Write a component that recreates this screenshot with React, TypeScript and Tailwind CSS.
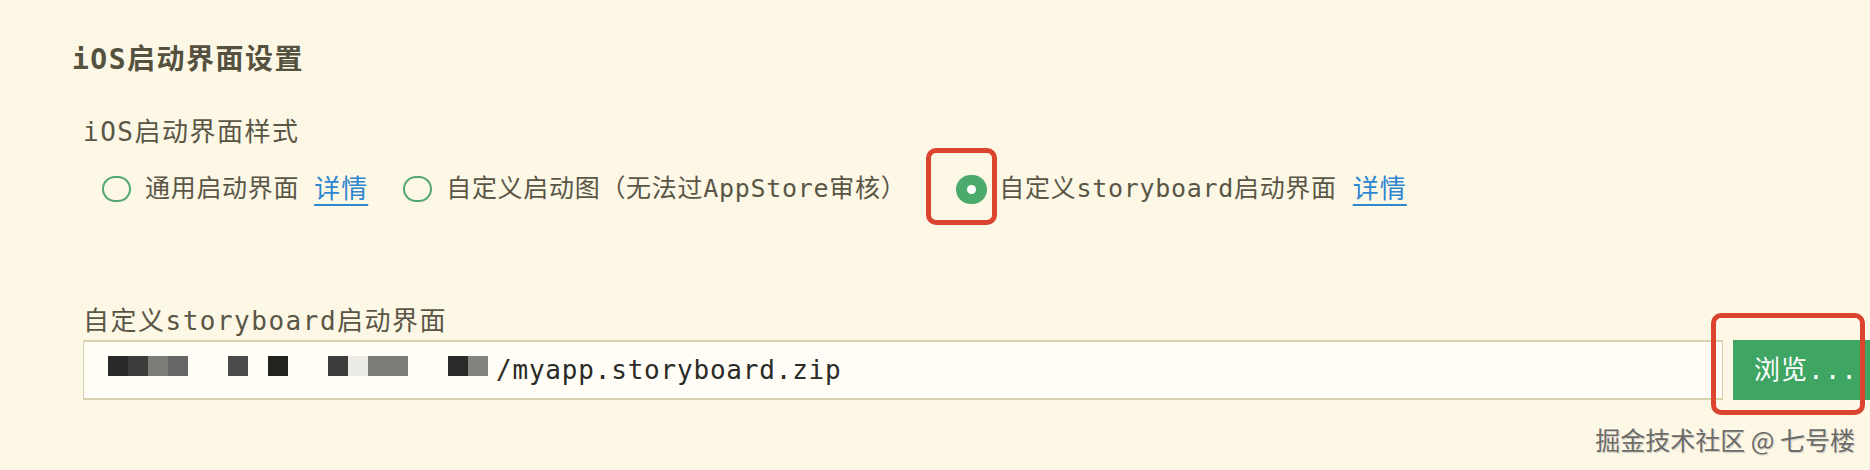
const mono = "font-['DejaVu_Sans_Mono','Noto_Sans_CJK_SC',monospace]"

function Radio({ checked = false }: { checked?: boolean }) {
  if (checked) {
    return (
      <span className="flex h-[29px] w-[31px] shrink-0 items-center justify-center rounded-full bg-[#4caa6c]">
        <span className="h-[9px] w-[9px] rounded-full bg-white" />
      </span>
    )
  }
  return <span className="block h-[26px] w-[29px] shrink-0 rounded-full border-2 border-[#52a673]" />
}

function Detail() {
  return <a className="text-[26px] tracking-[1px] text-[#2f86d1] underline decoration-[1.5px] underline-offset-[6px]">详情</a>
}

const blocks = [
  { w: "w-[20px]", c: "bg-[#282826]" },
  { w: "w-[20px]", c: "bg-[#3b3b39]" },
  { w: "w-[20px]", c: "bg-[#7b7b78]" },
  { w: "w-[20px]", c: "bg-[#666664]" },
  { w: "w-[40px]", c: "bg-transparent" },
  { w: "w-[20px]", c: "bg-[#4a4a48]" },
  { w: "w-[20px]", c: "bg-transparent" },
  { w: "w-[20px]", c: "bg-[#22221f]" },
  { w: "w-[40px]", c: "bg-transparent" },
  { w: "w-[20px]", c: "bg-[#3d3d3b]" },
  { w: "w-[20px]", c: "bg-[#ecebe6]" },
  { w: "w-[40px]", c: "bg-[#7c7c79]" },
  { w: "w-[40px]", c: "bg-transparent" },
  { w: "w-[20px]", c: "bg-[#2a2a28]" },
  { w: "w-[20px]", c: "bg-[#838380]" },
]

export default function App() {
  return (
    <div className={`relative h-[470px] w-[1870px] overflow-hidden bg-[#fdf8e6] text-[#5a5646] ${mono}`}>
      <div className="pl-[72px] pt-[42px]">
        <h2 className="text-[28px] font-bold leading-[36px] tracking-[1.5px] text-[#55513f]">iOS启动界面设置</h2>
      </div>

      <div className="pl-[83px]">
        <p className="mt-[38px] text-[26px] leading-[32px] tracking-[1.5px]">iOS启动界面样式</p>

        <div className="ml-[19px] mt-[21px] flex h-[40px] items-center text-[25px] tracking-[0.7px]">
          <Radio />
          <span className="ml-[14px]">通用启动界面</span>
          <span className="ml-[15px]"><Detail /></span>

          <span className="ml-[35px]"><Radio /></span>
          <span className="ml-[14px]">自定义启动图（无法过AppStore审核）</span>

          <span className="ml-[50px]"><Radio checked /></span>
          <span className="ml-[12px]">自定义storyboard启动界面</span>
          <span className="ml-[16px]"><Detail /></span>
        </div>

        <p className="mt-[96px] text-[26px] leading-[32px] tracking-[1.5px]">自定义storyboard启动界面</p>

        <div className="mt-[3px] flex h-[60px] w-[1820px]">
          <div className="flex w-[1640px] shrink-0 items-center border-y-2 border-l border-r border-[#d8d3ae] bg-[#fffdf6] pl-[24px]">
            <div className="flex h-[20px] -translate-y-[4px]">
              {blocks.map((b, i) => (
                <span key={i} className={`h-[20px] ${b.w} ${b.c}`} />
              ))}
            </div>
            <span className="ml-[8px] text-[26px] tracking-[0.8px] text-[#2a2a26]">/myapp.storyboard.zip</span>
          </div>
          <button className="ml-[10px] w-[160px] shrink-0 bg-[#3ea563] pl-[21px] text-left text-[26px] tracking-[1px] text-white">
            浏览...
          </button>
        </div>
      </div>

      <div className="pointer-events-none absolute left-[926px] top-[148px] h-[77px] w-[71px] rounded-[10px] border-[5px] border-[#db4530]" />
      <div className="pointer-events-none absolute left-[1711px] top-[313px] h-[102px] w-[154px] rounded-[10px] border-[5px] border-[#db4530]" />

      <p className="absolute right-[15px] top-[423px] font-['Noto_Sans_CJK_SC',sans-serif] text-[25px] leading-[32px] text-[#6b6a64] [text-shadow:0_0_2px_#fff,1px_1px_1px_rgba(0,0,0,0.25)]">
        掘金技术社区 @ 七号楼
      </p>
    </div>
  )
}
